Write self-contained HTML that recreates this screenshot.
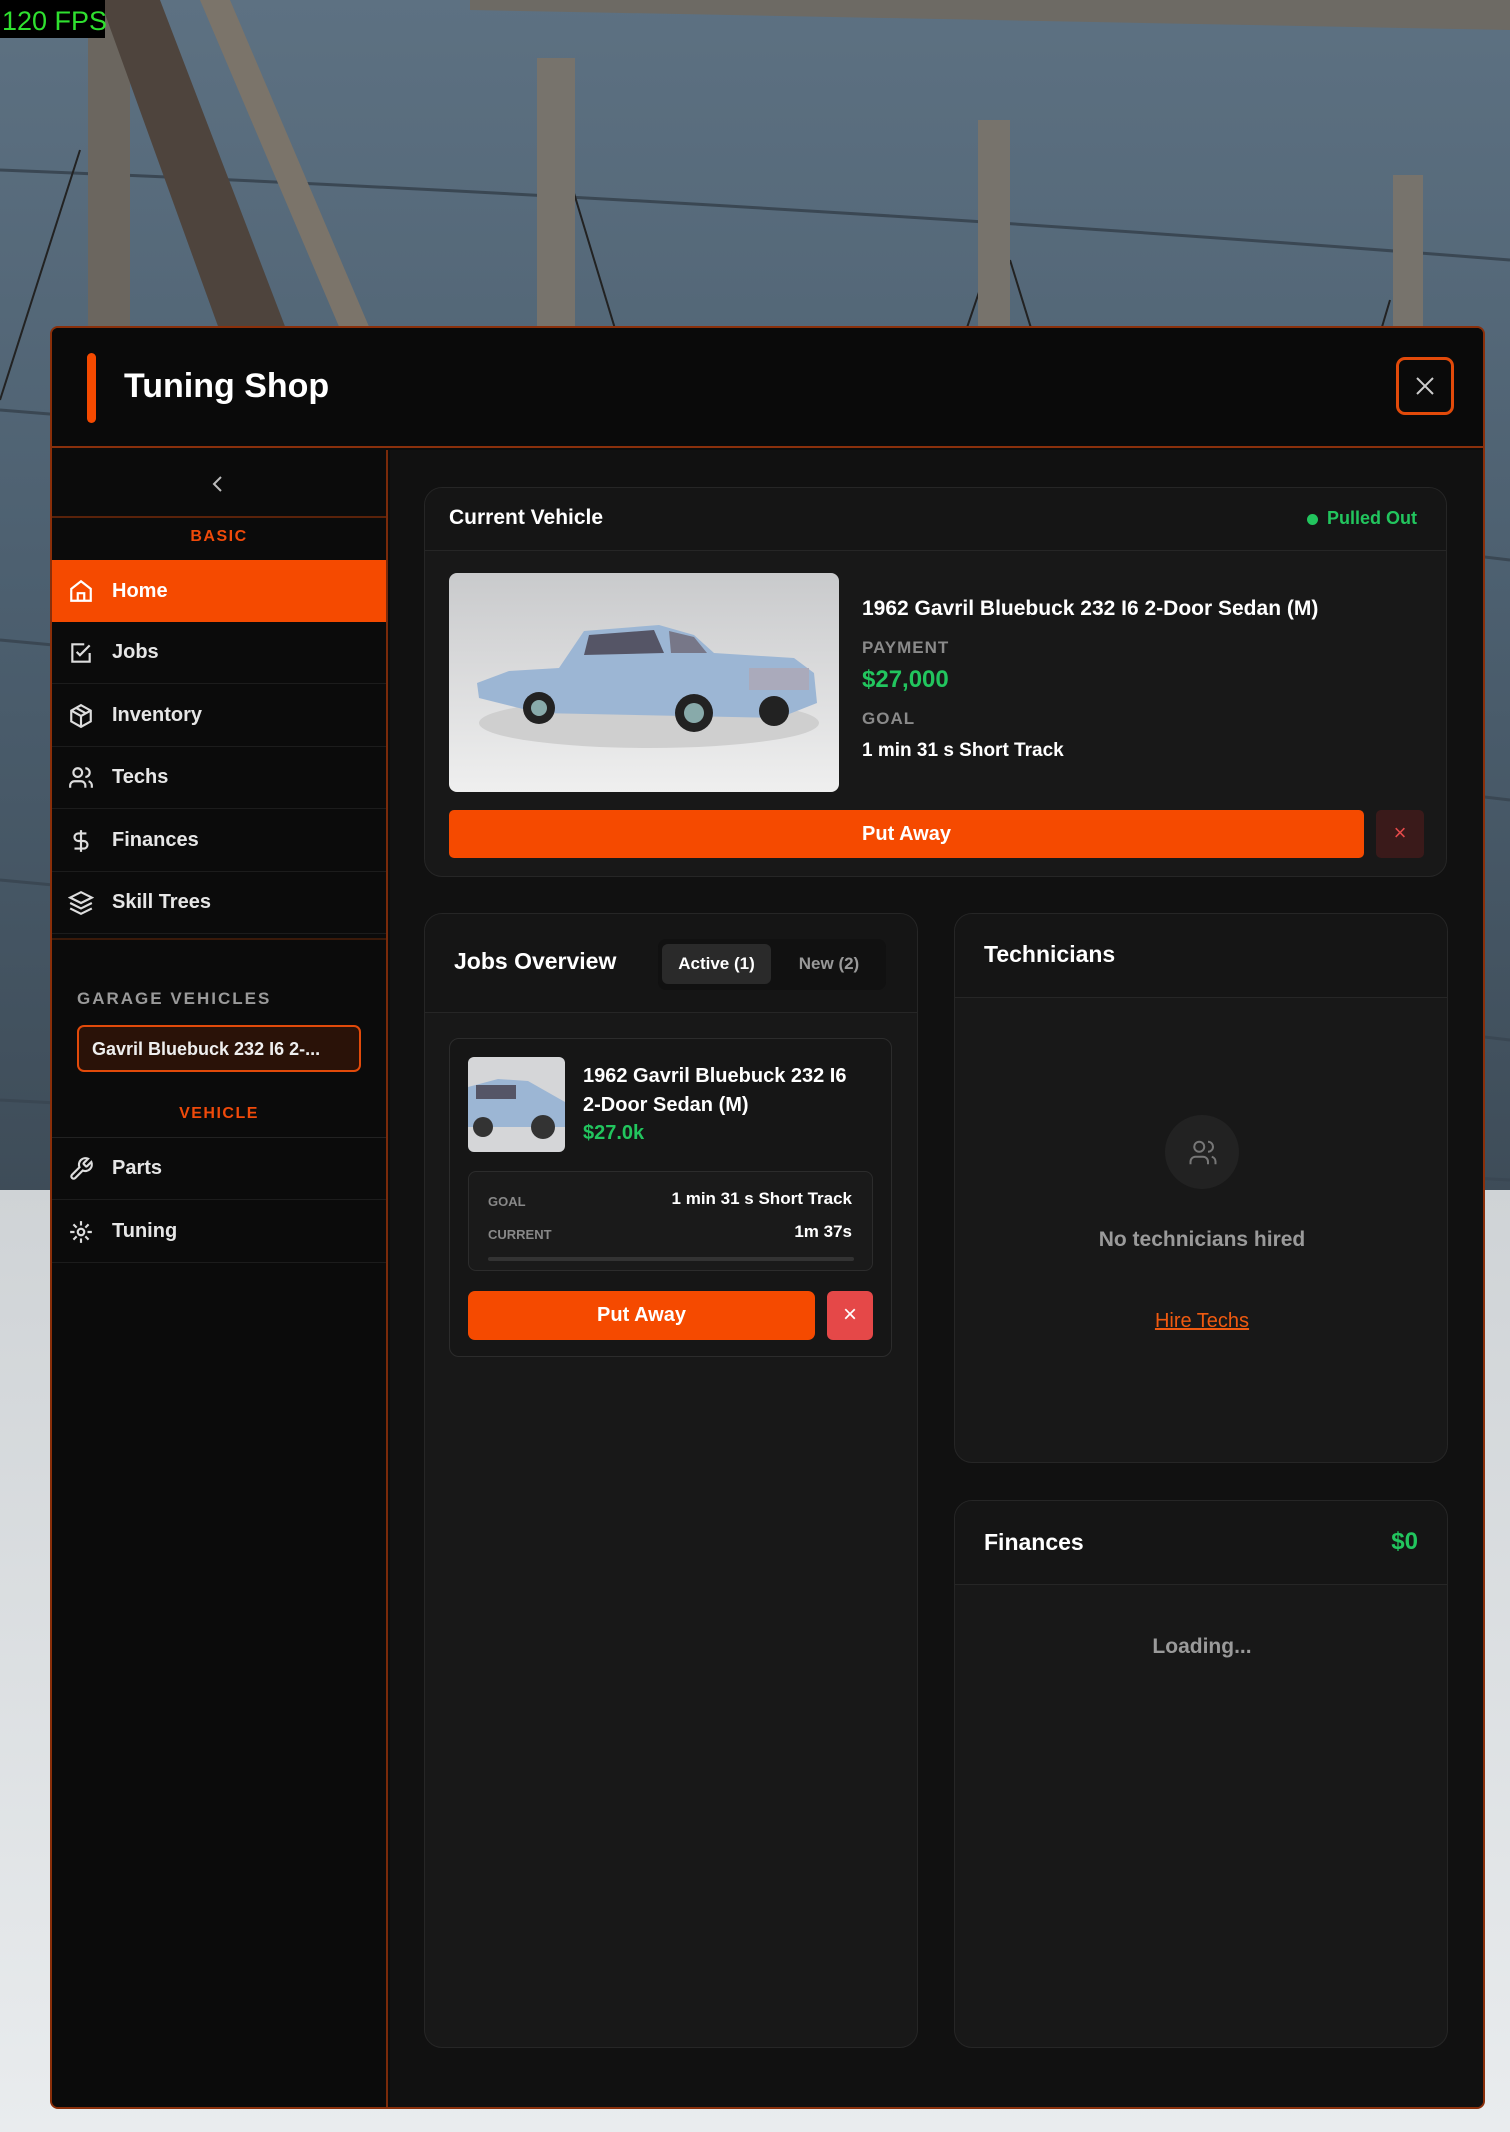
<!DOCTYPE html>
<html><head><meta charset="utf-8">
<style>
*{box-sizing:border-box;margin:0;padding:0}
body{width:1510px;height:2132px;overflow:hidden;position:relative;font-family:"Liberation Sans",sans-serif;background:#4f6272}
.abs{position:absolute}
#panel{left:50px;top:326px;width:1435px;height:1783px;background:#0c0c0c;border:2px solid #8a2f0a;border-radius:8px;overflow:hidden}
.hdr{left:0;top:0;width:1431px;height:120px;background:#0a0a0a;border-bottom:2px solid #8a300c}
.side{left:0;top:122px;width:336px;height:1660px;background:#0b0b0b;border-right:2px solid #7a2a0a}
.main{left:338px;top:122px;width:1095px;height:1660px;background:#111}
.nav{position:absolute;left:0;width:334px;height:62px;border-bottom:1px solid #1c1c1c;color:#e6e6e6;font-size:20px;font-weight:bold;display:flex;align-items:center;padding-left:60px}
.nav svg{position:absolute;left:16px;top:18px}
.nav.act{background:#f54a00;color:#fff;border-bottom:none}
.lbl{position:absolute;left:0;width:334px;text-align:center;color:#f04a0a;font-size:16px;font-weight:bold;letter-spacing:1.5px}
.card{position:absolute;background:#181818;border:1px solid #262626;border-radius:18px;overflow:hidden}
.ch{position:absolute;left:0;top:0;width:100%;border-bottom:1px solid #262626;background:#151515}
.ct{position:absolute;color:#fff;font-weight:bold;font-size:23px}
.btn{position:absolute;background:#f54a00;border-radius:5px;color:#fff;font-weight:bold;font-size:20px;display:flex;align-items:center;justify-content:center}
</style></head><body>
<svg class="abs" style="left:0;top:0" width="1510" height="2132">
<defs><linearGradient id="wall" x1="0" y1="0" x2="0" y2="1"><stop offset="0" stop-color="#5d7182"/><stop offset="0.5" stop-color="#4c5f6f"/><stop offset="1" stop-color="#3e4c58"/></linearGradient>
<linearGradient id="snow" x1="0" y1="0" x2="0" y2="1"><stop offset="0" stop-color="#cfd3d6"/><stop offset="1" stop-color="#e9ecee"/></linearGradient></defs>
<rect width="1510" height="1200" fill="url(#wall)"/>
<rect y="1190" width="1510" height="942" fill="url(#snow)"/>
<g stroke="#3a4753" stroke-width="3" fill="none">
<path d="M0 170 Q750 200 1510 260"/><path d="M0 410 Q750 470 1510 560"/><path d="M0 640 Q750 710 1510 800"/><path d="M0 880 Q750 950 1510 1040"/><path d="M0 1100 L1510 1180"/>
</g>
<g stroke="#222" stroke-width="2"><line x1="570" y1="180" x2="800" y2="940"/><line x1="1000" y1="230" x2="760" y2="940"/><line x1="1010" y1="260" x2="1220" y2="940"/><line x1="1390" y1="300" x2="1200" y2="940"/><line x1="80" y1="150" x2="0" y2="400"/></g>
<polygon points="470,0 1510,0 1510,30 470,10" fill="#6d6a64"/>
<rect x="537" y="58" width="38" height="1100" fill="#77736c"/>
<rect x="978" y="120" width="32" height="1100" fill="#77736c"/>
<rect x="1393" y="175" width="30" height="1100" fill="#77736c"/>
<rect x="88" y="0" width="42" height="1200" fill="#6b665f"/>
<polygon points="100,0 160,0 520,940 440,940" fill="#4e443d"/>
<polygon points="200,0 230,0 630,940 600,940" fill="#7b746a"/>
<rect x="0" y="0" width="105" height="38" fill="#000"/>
<text x="2" y="30" font-family="Liberation Sans" font-size="27" fill="#2fe02f">120 FPS</text>
</svg>

<div id="panel" class="abs">
 <div class="abs hdr">
  <div class="abs" style="left:35px;top:25px;width:9px;height:70px;background:#f54a00;border-radius:5px"></div>
  <div class="abs" style="left:72px;top:39px;color:#fff;font-size:34px;font-weight:bold">Tuning Shop</div>
  <div class="abs" style="left:1344px;top:29px;width:58px;height:58px;border:3px solid #e24a0a;border-radius:9px"></div>
  <svg class="abs" style="left:1362px;top:47px" width="22" height="22"><path d="M3 3L19 19M19 3L3 19" stroke="#ccc" stroke-width="2"/></svg>
 </div>
 <div class="abs side">
  <svg class="abs" style="left:158px;top:24px" width="14" height="20"><path d="M11 3L4 10L11 17" stroke="#bbb" stroke-width="2" fill="none"/></svg>
  <div class="abs" style="left:0;top:66px;width:334px;height:2px;background:#5a220a"></div>
  <div class="lbl" style="top:78px">BASIC</div>
  <div class="nav act" style="top:110px"><svg width="26" height="26" viewBox="0 0 24 24" fill="none" stroke="#fff" stroke-width="2"><path d="M3 10L12 3l9 7v11H3z"/><path d="M9 21v-7h6v7"/></svg>Home</div>
  <div class="nav" style="top:172px"><svg width="26" height="26" viewBox="0 0 24 24" fill="none" stroke="#ddd" stroke-width="2"><path d="M20 12v8H4V4h11"/><path d="M8 11l3 3 9-9"/></svg>Jobs</div>
  <div class="nav" style="top:235px"><svg width="26" height="26" viewBox="0 0 24 24" fill="none" stroke="#ddd" stroke-width="2"><path d="M12 2l9 5v10l-9 5-9-5V7z"/><path d="M3 7l9 5 9-5M12 12v10M7.5 4.5l9 5"/></svg>Inventory</div>
  <div class="nav" style="top:297px"><svg width="26" height="26" viewBox="0 0 24 24" fill="none" stroke="#ddd" stroke-width="2"><circle cx="9" cy="7" r="4"/><path d="M2 21v-2a4 4 0 014-4h6a4 4 0 014 4v2"/><path d="M16 3a4 4 0 010 8M22 21v-2a4 4 0 00-3-4"/></svg>Techs</div>
  <div class="nav" style="top:360px"><svg width="26" height="26" viewBox="0 0 24 24" fill="none" stroke="#ddd" stroke-width="2"><path d="M12 2v20M17 5H9.5a3.5 3.5 0 000 7h5a3.5 3.5 0 010 7H6"/></svg>Finances</div>
  <div class="nav" style="top:422px"><svg width="26" height="26" viewBox="0 0 24 24" fill="none" stroke="#ddd" stroke-width="2"><path d="M12 2L2 7l10 5 10-5z"/><path d="M2 12l10 5 10-5M2 17l10 5 10-5"/></svg>Skill Trees</div>
  <div class="abs" style="left:0;top:488px;width:334px;height:2px;background:#3a1a0a"></div>
  <div class="abs" style="left:25px;top:539px;color:#9a9a9a;font-size:17px;font-weight:bold;letter-spacing:2px">GARAGE VEHICLES</div>
  <div class="abs" style="left:25px;top:575px;width:284px;height:47px;background:#2a1208;border:2px solid #e24a0a;border-radius:7px;color:#eee;font-size:18px;font-weight:bold;padding:12px 0 0 13px">Gavril Bluebuck 232 I6 2-...</div>
  <div class="lbl" style="top:655px">VEHICLE</div>
  <div class="abs" style="left:0;top:687px;width:334px;height:1px;background:#222"></div>
  <div class="nav" style="top:688px"><svg width="26" height="26" viewBox="0 0 24 24" fill="none" stroke="#ddd" stroke-width="2"><path d="M14.7 6.3a1 1 0 000 1.4l1.6 1.6a1 1 0 001.4 0l3.8-3.8a6 6 0 01-7.9 7.9l-6.9 6.9a2.1 2.1 0 01-3-3l6.9-6.9a6 6 0 017.9-7.9z"/></svg>Parts</div>
  <div class="nav" style="top:751px"><svg width="26" height="26" viewBox="0 0 24 24" fill="none" stroke="#ddd" stroke-width="2"><circle cx="12" cy="12" r="3"/><path d="M12 2v4M12 18v4M2 12h4M18 12h4M5 5l3 3M16 16l3 3M5 19l3-3M16 8l3-3"/></svg>Tuning</div>
 </div>
 <div class="abs main">
  <div class="card" style="left:34px;top:37px;width:1023px;height:390px">
   <div class="ch" style="height:63px"></div>
   <div class="ct" style="left:24px;top:18px;font-size:21px">Current Vehicle</div>
   <div class="abs" style="left:882px;top:26px;width:11px;height:11px;border-radius:50%;background:#22c55e"></div>
   <div class="abs" style="left:902px;top:20px;color:#22c55e;font-size:18px;font-weight:bold">Pulled Out</div>
   <svg class="abs" style="left:24px;top:85px;border-radius:8px" width="390" height="219">
    <defs><linearGradient id="bg1" x1="0" y1="0" x2="0" y2="1"><stop offset="0" stop-color="#c9cacc"/><stop offset="1" stop-color="#efefef"/></linearGradient></defs>
    <rect width="390" height="219" fill="url(#bg1)"/>
    <ellipse cx="200" cy="150" rx="170" ry="25" fill="#cfcfcf"/>
    <path d="M28 110 L60 98 L110 95 L135 58 L210 52 L245 62 L265 80 L345 85 L365 100 L368 130 L330 145 L90 140 L30 125Z" fill="#9cb6d4"/>
    <path d="M140 62 L205 57 L215 80 L135 82Z" fill="#556"/>
    <path d="M220 58 L245 64 L258 80 L222 80Z" fill="#778"/>
    <rect x="300" y="95" width="60" height="22" fill="#aab"/>
    <circle cx="90" cy="135" r="16" fill="#222"/><circle cx="90" cy="135" r="8" fill="#8aa"/>
    <circle cx="245" cy="140" r="19" fill="#222"/><circle cx="245" cy="140" r="10" fill="#8aa"/>
    <circle cx="325" cy="138" r="15" fill="#222"/>
   </svg>
   <div class="abs" style="left:437px;top:109px;color:#fff;font-size:21px;font-weight:bold">1962 Gavril Bluebuck 232 I6 2-Door Sedan (M)</div>
   <div class="abs" style="left:437px;top:150px;color:#8a8a8a;font-size:17px;font-weight:bold;letter-spacing:1px">PAYMENT</div>
   <div class="abs" style="left:437px;top:178px;color:#22c55e;font-size:24px;font-weight:bold">$27,000</div>
   <div class="abs" style="left:437px;top:221px;color:#8a8a8a;font-size:17px;font-weight:bold;letter-spacing:1px">GOAL</div>
   <div class="abs" style="left:437px;top:252px;color:#fff;font-size:19px;font-weight:bold">1 min 31 s Short Track</div>
   <div class="btn" style="left:24px;top:322px;width:915px;height:48px">Put Away</div>
   <div class="abs" style="left:951px;top:322px;width:48px;height:48px;background:#3a1a1a;border-radius:5px;color:#e54a4a;font-size:22px;text-align:center;line-height:46px">×</div>
  </div>

  <div class="card" style="left:34px;top:463px;width:494px;height:1135px">
   <div class="ch" style="height:99px"></div>
   <div class="ct" style="left:29px;top:34px">Jobs Overview</div>
   <div class="abs" style="left:233px;top:25px;width:228px;height:51px;background:#111;border-radius:8px"></div>
   <div class="abs" style="left:237px;top:30px;width:109px;height:40px;background:#2a2a2a;border-radius:6px;color:#fff;font-size:17px;font-weight:bold;text-align:center;line-height:40px">Active (1)</div>
   <div class="abs" style="left:352px;top:30px;width:104px;height:40px;color:#999;font-size:17px;font-weight:bold;text-align:center;line-height:40px">New (2)</div>
   <div class="abs" style="left:24px;top:124px;width:443px;height:319px;border:1px solid #2c2c2c;border-radius:10px;background:#161616"></div>
   <svg class="abs" style="left:43px;top:143px;border-radius:6px" width="97" height="95"><rect width="97" height="95" fill="#d5d6d8"/><path d="M0 30 L30 22 L60 24 L97 45 L97 70 L0 70Z" fill="#9cb6d4"/><rect x="8" y="28" width="40" height="14" fill="#556"/><circle cx="75" cy="70" r="12" fill="#333"/><circle cx="15" cy="70" r="10" fill="#333"/></svg>
   <div class="abs" style="left:158px;top:148px;width:275px;color:#fff;font-size:20px;font-weight:bold;line-height:29px">1962 Gavril Bluebuck 232 I6 2-Door Sedan (M)</div>
   <div class="abs" style="left:158px;top:208px;color:#22c55e;font-size:20px;font-weight:bold">$27.0k</div>
   <div class="abs" style="left:43px;top:257px;width:405px;height:100px;border:1px solid #2c2c2c;border-radius:8px;background:#1a1a1a"></div>
   <div class="abs" style="left:63px;top:280px;color:#888;font-size:13px;font-weight:bold">GOAL</div>
   <div class="abs" style="right:65px;top:275px;color:#fff;font-size:17px;font-weight:bold">1 min 31 s Short Track</div>
   <div class="abs" style="left:63px;top:313px;color:#888;font-size:13px;font-weight:bold">CURRENT</div>
   <div class="abs" style="right:65px;top:308px;color:#fff;font-size:17px;font-weight:bold">1m 37s</div>
   <div class="abs" style="left:63px;top:343px;width:366px;height:4px;background:#333;border-radius:2px"></div>
   <div class="btn" style="left:43px;top:377px;width:347px;height:49px;border-radius:7px">Put Away</div>
   <div class="abs" style="left:402px;top:377px;width:46px;height:49px;background:#e54848;border-radius:6px;color:#fff;font-size:24px;text-align:center;line-height:47px">×</div>
  </div>

  <div class="card" style="left:564px;top:463px;width:494px;height:550px">
   <div class="ch" style="height:84px"></div>
   <div class="ct" style="left:29px;top:27px">Technicians</div>
   <div class="abs" style="left:210px;top:201px;width:74px;height:74px;border-radius:50%;background:#222"></div>
   <svg class="abs" style="left:233px;top:224px" width="30" height="30" viewBox="0 0 24 24" fill="none" stroke="#777" stroke-width="1.6"><circle cx="9" cy="7" r="4"/><path d="M2 21v-2a4 4 0 014-4h6a4 4 0 014 4v2"/><path d="M16 3a4 4 0 010 8M22 21v-2a4 4 0 00-3-4"/></svg>
   <div class="abs" style="left:0;width:494px;top:314px;text-align:center;color:#9a9a9a;font-size:21px;font-weight:bold">No technicians hired</div>
   <div class="abs" style="left:0;width:494px;top:396px;text-align:center;color:#f05a10;font-size:20px;text-decoration:underline">Hire Techs</div>
  </div>

  <div class="card" style="left:564px;top:1050px;width:494px;height:548px">
   <div class="ch" style="height:84px"></div>
   <div class="ct" style="left:29px;top:28px">Finances</div>
   <div class="abs" style="right:29px;top:27px;color:#22c55e;font-size:24px;font-weight:bold">$0</div>
   <div class="abs" style="left:0;width:494px;top:134px;text-align:center;color:#9a9a9a;font-size:21px;font-weight:bold">Loading...</div>
  </div>
 </div>
</div>
</body></html>
